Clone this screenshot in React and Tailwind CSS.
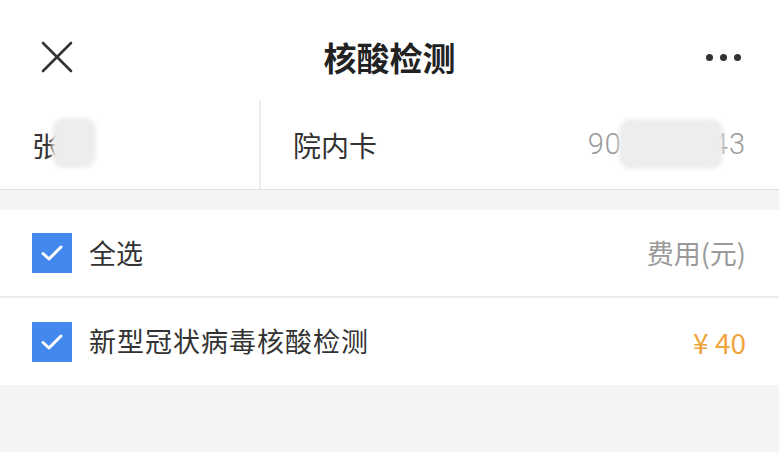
const cjk = { fontFamily: "'Noto Sans CJK SC', 'Noto Sans', sans-serif" }

function Check() {
  return (
    <div className="w-10 h-10 bg-[#4388ec] flex items-center justify-center shrink-0">
      <svg width="26" height="26" viewBox="0 0 26 26" fill="none">
        <path d="M4 13.5 L10 19 L22 7" stroke="#fff" strokeWidth="3" strokeLinecap="round" strokeLinejoin="round" />
      </svg>
    </div>
  )
}

function Blur({ className }) {
  return <div className={`absolute rounded-[12px] bg-[#ededed] blur-[2px] ${className}`} />
}

export default function App() {
  return (
    <div className="w-[779px] h-[452px] bg-[#f4f4f4] overflow-hidden text-[#333]" style={cjk}>
      {/* Header */}
      <div className="h-[100px] bg-white flex items-center justify-between pl-[41px] pr-[38px] pt-[14px]">
        <svg width="32" height="32" viewBox="0 0 32 32" fill="none">
          <path d="M2 2 L30 30 M30 2 L2 30" stroke="#333" strokeWidth="2.6" strokeLinecap="round" />
        </svg>
        <div className="text-[33px] font-bold leading-none text-[#222]">核酸检测</div>
        <div className="flex gap-[7px] items-center">
          <span className="w-[7px] h-[7px] rounded-full bg-[#333]" />
          <span className="w-[7px] h-[7px] rounded-full bg-[#333]" />
          <span className="w-[7px] h-[7px] rounded-full bg-[#333]" />
        </div>
      </div>

      {/* Patient info */}
      <div className="h-[90px] bg-white border-b border-[#e3e3e3] flex">
        <div className="w-[261px] border-r-2 border-[#ececec] flex items-center pl-[32px]">
          <div className="relative text-[28px]">
            张
            <Blur className="left-[20px] -top-[6px] w-[44px] h-[50px]" />
          </div>
        </div>
        <div className="flex-1 flex items-center justify-between pl-[32px] pr-[33px]">
          <div className="text-[28px]">院内卡</div>
          <div className="relative text-[29px] font-light text-[#9a9a9a] tracking-[1px]" style={{ fontFamily: "'Roboto', sans-serif" }}>
            90<span className="inline-block w-[90px]" />43
            <Blur className="left-[31px] -top-[4px] w-[104px] h-[50px]" />
          </div>
        </div>
      </div>

      <div className="h-[20px]" />

      {/* Items */}
      <div className="bg-white">
        <div className="h-[88px] flex items-center justify-between pl-[32px] pr-[33px] border-b-2 border-[#ececec]">
          <div className="flex items-center gap-[17px]">
            <Check />
            <span className="text-[27px]">全选</span>
          </div>
          <span className="text-[27px] text-[#9a9a9a]">费用(元)</span>
        </div>
        <div className="h-[87px] flex items-center justify-between pl-[32px] pr-[33px]">
          <div className="flex items-center gap-[17px]">
            <Check />
            <span className="text-[27px] tracking-[1px]">新型冠状病毒核酸检测</span>
          </div>
          <span className="text-[28px] text-[#f0a43c]">¥ 40</span>
        </div>
      </div>
    </div>
  )
}
